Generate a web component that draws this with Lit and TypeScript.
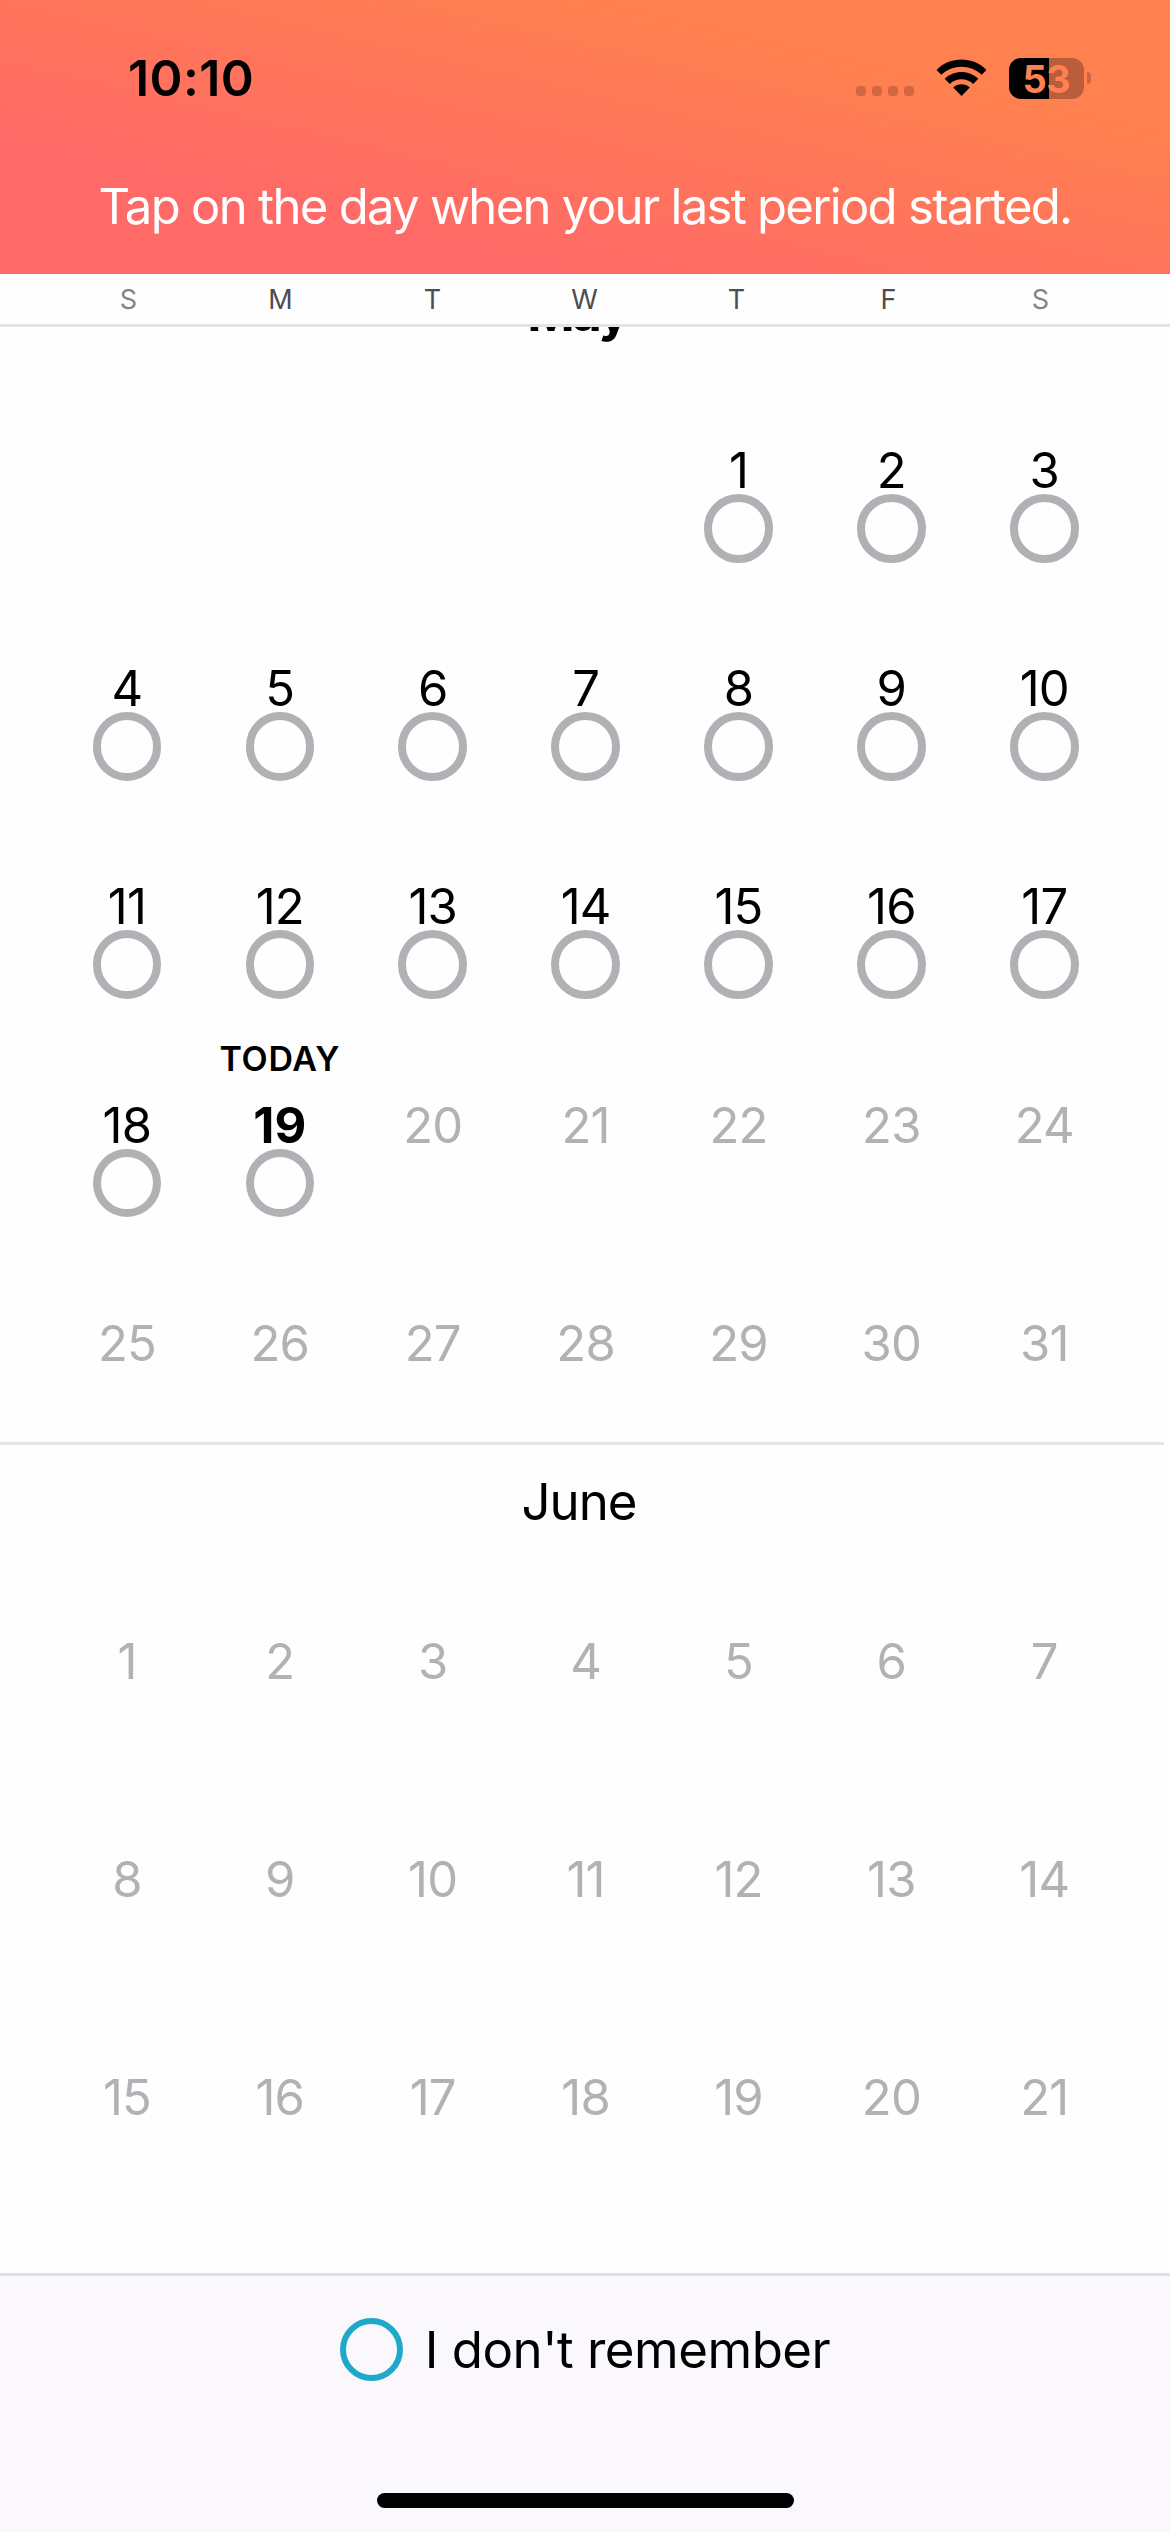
import { LitElement, html, css, svg, nothing } from "lit";
import { customElement, property } from "lit/decorators.js";
import { classMap } from "lit/directives/class-map.js";

const FONT = css`Inter, "Liberation Sans", sans-serif`;

@customElement("status-bar")
class StatusBar extends LitElement {
  static styles = css`
    :host {
      display: flex;
      justify-content: space-between;
      height: 156px;
      padding: 0 79px 0 128px;
      box-sizing: border-box;
      font-family: ${FONT};
      color: #000;
    }
    .time {
      font-size: 50px;
      font-weight: 600;
      line-height: 156px;
      letter-spacing: 0.4px;
    }
    .icons {
      display: flex;
      align-items: center;
    }
    .dots {
      display: flex;
      gap: 6px;
      margin: 26px 70px 0 0;
      margin-right: 22px;
    }
    .dot {
      width: 10px;
      height: 10px;
      border-radius: 3.5px;
      background: rgba(0, 0, 0, 0.18);
    }
    .wifi {
      width: 51px;
      height: 38px;
      margin-right: 22px;
    }
    .battery {
      width: 75px;
      height: 41px;
      border-radius: 12px;
      background: linear-gradient(90deg, #000 40px, #b95d3a 40px);
      color: #ff8152;
      font-size: 38px;
      font-weight: 700;
      line-height: 42px;
      text-align: center;
      letter-spacing: -0.5px;
    }
    .nub {
      width: 4px;
      height: 12px;
      margin-left: 3px;
      border-radius: 0 4px 4px 0;
      background: #c96540;
    }
  `;

  render() {
    return html`
      <div class="time">10:10</div>
      <div class="icons">
        <div class="dots">${[0, 1, 2, 3].map(() => html`<span class="dot"></span>`)}</div>
        <svg class="wifi" viewBox="0 0 51 38">
          ${svg`
            <path d="M0.5 10.9C14-3 37-3 50.5 10.9L45.7 15.8C34.6 5 16.4 5 5.3 15.8Z"/>
            <path d="M8.7 19.7C18 10.7 33 10.7 42.3 19.7L37.2 24.9C30.6 18.8 20.4 18.8 13.8 24.9Z"/>
            <path d="M17.2 28.4C22 24.2 29 24.2 33.8 28.4L25.5 37Z"/>
          `}
        </svg>
        <div class="battery">53</div>
        <div class="nub"></div>
      </div>
    `;
  }
}

@customElement("calendar-month")
class CalendarMonth extends LitElement {
  @property() name = "";
  @property({ type: Number }) offset = 0;
  @property({ type: Number }) days = 30;
  /** Last day that can be chosen; later ones are dimmed. */
  @property({ type: Number }) selectable = 0;
  @property({ type: Number }) today = 0;

  static styles = css`
    :host {
      display: block;
      font-family: ${FONT};
      color: #000;
    }
    .title {
      width: 1164px;
      height: 100px;
      box-sizing: border-box;
      border-top: 3px solid #e5e5e5;
      padding: 17px 6px 0 0;
      font-size: 51px;
      line-height: 80px;
      text-align: center;
      letter-spacing: -1px;
    }
    .current {
      font-weight: 700;
      padding: 19px 10px 0 0;
      letter-spacing: -2.5px;
    }
    .grid {
      display: grid;
      grid-template-columns: repeat(7, 152.9px);
      grid-auto-rows: 218.2px;
      padding-left: 50.5px;
    }
    .day {
      display: flex;
      flex-direction: column;
      align-items: center;
      padding-top: 31px;
    }
    .tag {
      height: 63px;
      font-size: 34px;
      font-weight: 600;
      line-height: 44px;
      letter-spacing: 0.7px;
    }
    .number {
      height: 49px;
      font-size: 49px;
      line-height: 51px;
      letter-spacing: -0.8px;
      color: #b2b1b5;
    }
    .enabled {
      color: #000;
    }
    .bold {
      font-weight: 700;
      letter-spacing: 0;
    }
    .ring {
      width: 68.5px;
      height: 68.5px;
      box-sizing: border-box;
      border: 8.4px solid #b2b0b4;
      border-radius: 50%;
    }
  `;

  private renderDay(day: number) {
    const enabled = day <= this.selectable;
    const isToday = day === this.today;
    return html`
      <div class="day">
        <div class="tag">${isToday ? "TODAY" : nothing}</div>
        <div class=${classMap({ number: true, enabled, bold: isToday })}>${day}</div>
        ${enabled ? html`<div class="ring"></div>` : nothing}
      </div>
    `;
  }

  render() {
    const blanks = Array.from({ length: this.offset }, () => html`<div></div>`);
    const days = Array.from({ length: this.days }, (_, i) => this.renderDay(i + 1));
    return html`
      <div class=${classMap({ title: true, current: this.today > 0 })}>${this.name}</div>
      <div class="grid">${blanks}${days}</div>
    `;
  }
}

@customElement("app-root")
class AppRoot extends LitElement {
  static styles = css`
    :host {
      display: flex;
      flex-direction: column;
      width: 1170px;
      height: 2532px;
      overflow: hidden;
      background: #fefefe;
      font-family: ${FONT};
      color: #000;
    }
    .header {
      flex: none;
      height: 274px;
      background: linear-gradient(to top right, #ff6968 23%, #ff814f 76%);
    }
    .prompt {
      font-size: 49px;
      line-height: 102px;
      text-align: center;
      white-space: nowrap;
      letter-spacing: -1.7px;
      color: #fff;
    }
    .weekdays {
      flex: none;
      display: grid;
      grid-template-columns: repeat(7, 152px);
      height: 53px;
      box-sizing: border-box;
      padding-left: 52.5px;
      border-bottom: 3px solid #e3e3e3;
      font-size: 27px;
      line-height: 52px;
      text-align: center;
      color: #4d4c50;
    }
    .weekend {
      color: #848388;
    }
    .scroller {
      flex: none;
      height: 1946px;
      overflow: hidden;
    }
    .months {
      margin-top: -76px;
    }
    .footer {
      flex: 1;
      display: flex;
      flex-direction: column;
      align-items: center;
      justify-content: space-between;
      box-sizing: border-box;
      border-top: 3px solid #e0dee3;
      padding: 41px 0 24px;
      background: #faf8fc;
    }
    .option {
      display: flex;
      align-items: center;
      gap: 22px;
      font-size: 51px;
      letter-spacing: -0.5px;
      white-space: nowrap;
    }
    .label {
      height: 64px;
      line-height: 66px;
    }
    .radio {
      width: 63px;
      height: 63px;
      box-sizing: border-box;
      border: 6px solid #20a8c9;
      border-radius: 50%;
    }
    .home {
      width: 417px;
      height: 15px;
      border-radius: 8px;
      background: #000;
    }
  `;

  render() {
    const weekdays = ["S", "M", "T", "W", "T", "F", "S"];
    return html`
      <div class="header">
        <status-bar></status-bar>
        <div class="prompt">Tap on the day when your last period started.</div>
      </div>
      <div class="weekdays">
        ${weekdays.map(
          (d, i) => html`<span class=${classMap({ weekend: i === 0 || i === 6 })}>${d}</span>`
        )}
      </div>
      <div class="scroller">
        <div class="months">
          <calendar-month name="May" offset="4" days="31" selectable="19" today="19"></calendar-month>
          <calendar-month name="June" days="21"></calendar-month>
        </div>
      </div>
      <div class="footer">
        <div class="option"><span class="radio"></span><span class="label">I don't remember</span></div>
        <div class="home"></div>
      </div>
    `;
  }
}
